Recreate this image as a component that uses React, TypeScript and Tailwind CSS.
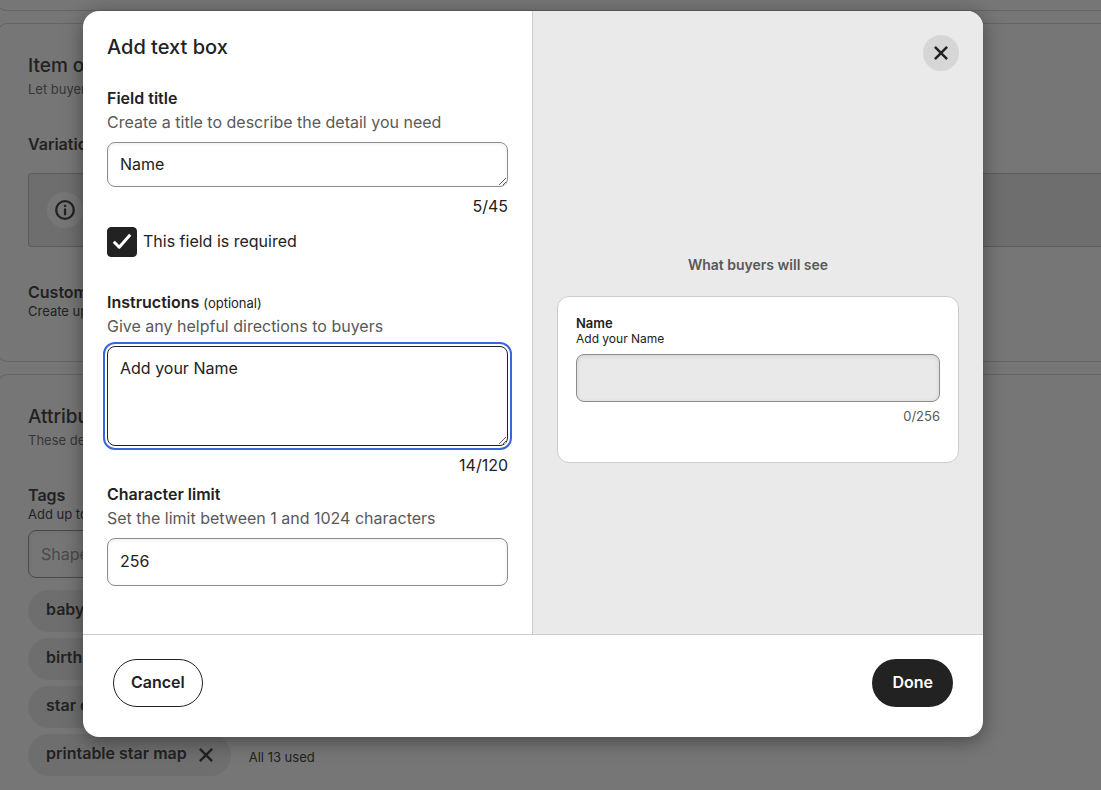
import React, { useState } from 'react';

const tags = ['baby', 'birth', 'star chart', 'printable star map'];

const inputClass =
  'block w-full rounded-lg border border-[#8c8c8c] bg-white px-3 text-base text-[#222222] shadow-[inset_0_1px_4px_rgba(34,34,34,0.08)] outline-none';

function CloseIcon({ className }: { className: string }) {
  return (
    <svg className={className} viewBox="0 0 14 14" fill="none" stroke="currentColor" strokeWidth="2.5" aria-hidden="true">
      <path d="M0.9 0.9L13.1 13.1M13.1 0.9L0.9 13.1" />
    </svg>
  );
}

function ListingPage() {
  return (
    <div className="-ml-1">
      <section className="-mr-4 h-[11px] rounded-b-xl border-b border-l border-[#cccccc]" />

      <section className="mt-3 h-[339px] rounded-l-xl border border-r-0 border-[#cccccc] pt-[29px] pl-[31px]">
        <h2 className="text-[19px] leading-[26px] font-medium">Item options</h2>
        <p className="text-[13px] leading-5 text-[#595959]">Let buyers</p>
        <h3 className="mt-[33px] text-base leading-6 font-semibold">Variations</h3>
        <div className="mt-[17px] flex h-[74px] items-center rounded-l-sm border border-r-0 border-[#b8b8b8] bg-[#eaeaea] pl-[18px]">
          <span className="flex size-9 items-center justify-center rounded-full bg-white">
            <svg className="size-5" viewBox="0 0 20 20" fill="none" aria-hidden="true">
              <circle cx="10" cy="10" r="8.8" stroke="#222222" strokeWidth="2.3" />
              <path d="M8.9 4.8h2.3v2.2H8.9zM8.9 8.5h2.3v6.7H8.9z" fill="#222222" />
            </svg>
          </span>
        </div>
        <h3 className="mt-[33px] text-base leading-6 font-semibold">Custom</h3>
        <p className="text-[13px] leading-[14px]">Create up</p>
      </section>

      <section className="mt-3 h-[480px] rounded-l-xl border border-r-0 border-[#cccccc] pt-[29px] pl-[31px]">
        <h2 className="text-[19px] leading-[26px] font-medium">Attributes</h2>
        <p className="text-[13px] leading-5 text-[#595959]">These details</p>
        <div className="mt-[33px] text-base leading-6 font-semibold">
          <label htmlFor="tag">Tags</label>
        </div>
        <p className="text-[13px] leading-[14px]">Add up to</p>
        <input
          id="tag"
          placeholder="Shape"
          className="mt-[9px] block h-12 w-80 rounded-lg border border-[#8c8c8c] px-3 text-base shadow-[inset_0_1px_4px_rgba(34,34,34,0.08)] placeholder:text-[#8c8c8c]"
        />
        <ul className="mt-3 flex flex-col gap-[6px]">
          {tags.map((tag) => (
            <li key={tag} className="flex items-center">
              <span className="flex h-[42px] items-center gap-3 rounded-full bg-[#eaeaea] px-[18px] text-base font-semibold">
                <span className="pb-1">{tag}</span>
                <button type="button" aria-label={`Remove ${tag}`}>
                  <CloseIcon className="size-[14px]" />
                </button>
              </span>
              {tag === tags[tags.length - 1] && <span className="ml-[18px] pt-[6px] text-[13px]">All 13 used</span>}
            </li>
          ))}
        </ul>
      </section>
    </div>
  );
}

export default function App() {
  const [title, setTitle] = useState('Name');
  const [required, setRequired] = useState(true);
  const [instructions, setInstructions] = useState('Add your Name');
  const [limit, setLimit] = useState('256');

  return (
    <div className="relative h-screen overflow-hidden bg-white font-['Inter',sans-serif] text-[#222222]">
      <ListingPage />

      <div className="absolute inset-0 flex items-start justify-center bg-[#222222]/62 pt-[11px] pr-[35px]">
        <div
          role="dialog"
          aria-labelledby="dialog-title"
          className="w-full max-w-[900px] overflow-hidden rounded-2xl bg-white shadow-[0_4px_20px_rgba(0,0,0,0.4)]"
        >
          <div className="grid grid-cols-2">
            {/* Form */}
            <div className="border-r border-[#cccccc] px-6 pt-6 pb-12">
              <h1 id="dialog-title" className="text-[20px] leading-6 font-medium">Add text box</h1>

              <label htmlFor="field-title" className="mt-[27px] block text-base leading-6 font-semibold">
                Field title
              </label>
              <p className="text-base leading-6 text-[#595959]">Create a title to describe the detail you need</p>
              <textarea
                id="field-title"
                value={title}
                onChange={(e) => setTitle(e.target.value)}
                className={`${inputClass} mt-2 h-[45px] resize-y overflow-hidden py-[9px] leading-6`}
              />
              <p className="mt-[7px] text-right text-base leading-6">5/45</p>

              <label className="mt-[9px] flex items-center gap-[6px] text-base leading-6">
                <span className="relative size-[30px]">
                  <input
                    type="checkbox"
                    checked={required}
                    onChange={(e) => setRequired(e.target.checked)}
                    className="peer block size-[30px] appearance-none rounded border border-[#222222] bg-white checked:bg-[#222222]"
                  />
                  <svg
                    className="pointer-events-none absolute inset-0 hidden size-[30px] peer-checked:block"
                    viewBox="0 0 30 30"
                    fill="none"
                    stroke="#ffffff"
                    strokeWidth="3"
                    strokeLinejoin="round"
                    aria-hidden="true"
                  >
                    <path d="M6.8 14.8L12.2 20.2L23.2 7.8" />
                  </svg>
                </span>
                <span className="pb-0.5">This field is required</span>
              </label>

              <label htmlFor="instructions" className="mt-[33px] block text-base leading-6 font-semibold">
                Instructions <span className="text-[13px] leading-none font-normal">(optional)</span>
              </label>
              <p className="text-base leading-6 text-[#595959]">Give any helpful directions to buyers</p>
              <textarea
                id="instructions"
                value={instructions}
                onChange={(e) => setInstructions(e.target.value)}
                className="mt-2 block h-[100px] w-full resize-y rounded-lg border border-[#222222] bg-white px-3 py-[9px] text-base leading-6 outline-2 outline-offset-2 outline-[#3a66db]"
              />
              <p className="mt-[7px] text-right text-base leading-6">14/120</p>

              <label htmlFor="limit" className="mt-[5px] block text-base leading-6 font-semibold">
                Character limit
              </label>
              <p className="text-base leading-6 text-[#595959]">Set the limit between 1 and 1024 characters</p>
              <input
                id="limit"
                value={limit}
                onChange={(e) => setLimit(e.target.value)}
                className={`${inputClass} mt-2 h-12 pb-0.5`}
              />
            </div>

            {/* Preview */}
            <div className="flex flex-col bg-[#eaeaea] p-6">
              <button
                type="button"
                aria-label="Close"
                className="flex size-9 items-center justify-center self-end rounded-full bg-[#d6d6d6]"
              >
                <CloseIcon className="size-[14px]" />
              </button>
              <h2 className="mt-[184px] text-center text-sm leading-5 font-semibold text-[#595959]">
                What buyers will see
              </h2>
              <div className="mt-[21px] rounded-xl border border-[#cccccc] bg-white px-[18px] pt-[18px] pb-[37px]">
                <label htmlFor="preview" className="block text-[13px] leading-4 font-semibold">{title}</label>
                <p className="text-xs leading-4">{instructions}</p>
                <input
                  id="preview"
                  disabled
                  className="mt-[7px] block h-12 w-full rounded-lg border border-[#8c8c8c] bg-[#e9e9e9] px-3 shadow-[inset_0_1px_4px_rgba(34,34,34,0.12)]"
                />
                <p className="mt-[5px] text-right text-[13px] leading-[18px] text-[#595959]">0/{limit}</p>
              </div>
            </div>
          </div>

          <div className="flex items-start justify-between border-t border-[#cccccc] px-[30px] pt-6 pb-[30px]">
            <button type="button" className="h-12 rounded-full border border-[#222222] px-[17px] pb-0.5 text-base font-semibold">
              Cancel
            </button>
            <button type="button" className="h-12 rounded-full bg-[#222222] px-5 pb-0.5 text-base font-semibold text-white">
              Done
            </button>
          </div>
        </div>
      </div>
    </div>
  );
}
